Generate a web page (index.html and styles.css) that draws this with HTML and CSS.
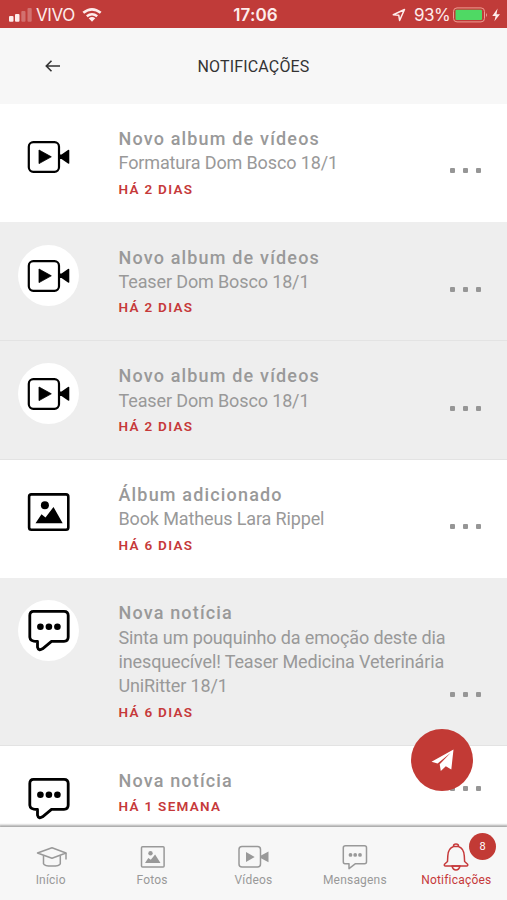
FILE: index.html
```html
<!DOCTYPE html>
<html lang="pt-BR">
<head>
<meta charset="utf-8">
<title>Notificações</title>
<link rel="stylesheet" href="styles.css">
</head>
<body>
<svg class="defs" aria-hidden="true">
  <symbol id="video" viewBox="0 0 61 61">
    <rect x="10.8" y="16.2" width="30.2" height="29.6" rx="4.5" fill="none" stroke="currentColor" stroke-width="2.2"/>
    <path d="M21 24v13.6L33.300 30.8z" stroke="currentColor" stroke-width=".8" stroke-linejoin="round"/>
    <path d="M41 28.5h2.5l6.500-4.600q1.300-.5 1.300.7v12.300q0 1.200-1.300.7L43.500 33H41z"/>
  </symbol>
  <symbol id="photo" viewBox="0 0 61 61">
    <rect x="11.100" y="12.400" width="39.200" height="35.400" rx="2.300" fill="none" stroke="currentColor" stroke-width="2.600"/>
    <circle cx="26.900" cy="23.200" r="4"/>
    <path d="M17.500 41.300l6-9.100 4 3.200 8-10.400 9.200 16.300z"/>
  </symbol>
  <symbol id="chat" viewBox="0 0 61 61">
    <path d="M15.500 11.300H46q4.200 0 4.200 4.200v21.600q0 4.200-4.200 4.200H33.500l-9 7.500q-4 2.500-5-1.700v-5.600q-7.500 0-7.700-4.200V15.500q0-4.200 3.700-4.200z" fill="none" stroke="currentColor" stroke-width="2.800" stroke-linejoin="round"/>
    <circle cx="22.400" cy="26.800" r="3.300"/><circle cx="30.900" cy="26.800" r="3.300"/><circle cx="39.400" cy="26.800" r="3.300"/>
  </symbol>
</svg>
<div class="app">
  <div class="status">
    <div class="status-side">
      <svg class="signal" width="24" height="16" viewBox="0 0 24 16"><rect x="0" y="9" width="4.500" height="5.800" rx="1"/><rect x="6" y="7" width="4.500" height="7.800" rx="1"/><g opacity=".3"><rect x="12.300" y="4" width="4.200" height="10.800" rx="1"/><rect x="18.500" y="1" width="4.200" height="13.800" rx="1"/></g></svg>
      <span class="carrier">VIVO</span>
      <svg class="wifi" width="20" height="16" viewBox="0 0 20 16"><g fill="none" stroke="currentColor" stroke-width="2.600"><path d="M1.300 5.800Q10-1.200 18.700 5.800"/><path d="M4.800 9.300Q10 5.200 15.200 9.300"/></g><path d="M6.700 11.200Q10 8.800 13.300 11.200L10 14.700z"/></svg>
    </div>
    <span class="clock">17:06</span>
    <div class="status-side status-right">
      <svg class="location" width="14" height="14" viewBox="0 0 14 14"><path d="M1.300 6.800L12.500 1.500 7.600 12.500 6.800 7.300z" fill="none" stroke="currentColor" stroke-width="1.500" stroke-linejoin="round"/></svg>
      <span class="percent">93%</span>
      <svg class="battery" width="48" height="16" viewBox="0 0 48 16"><rect x="-.5" y=".9" width="31" height="14" rx="3.500" fill="none" stroke="#ef9d92"/><rect x="1.500" y="2.800" width="26.500" height="10.300" rx="1" fill="#4fd964"/><path d="M32 6q2 2 0 4z" fill="#e7a09b"/><path d="M43.600 1.500L38.300 9h3.300l-1.200 5.300L46 7.300h-3.500z"/></svg>
    </div>
  </div>
  <header class="header">
    <svg class="back" width="16" height="14" viewBox="0 0 16 14"><path d="M15 7H1.500M6.500 1.800L1.300 7l5.200 5.200" fill="none" stroke="#333" stroke-width="1.600"/></svg>
    <h1 class="page-title">NOTIFICAÇÕES</h1>
  </header>
  <main class="list">
    <article class="item">
      <span class="avatar"><svg><use href="#video"/></svg></span>
      <div class="body"><h2>Novo album de vídeos</h2><p>Formatura Dom Bosco 18/1</p><time>HÁ 2 DIAS</time></div>
      <span class="more"><i></i><i></i><i></i></span>
    </article>
    <article class="item unread">
      <span class="avatar"><svg><use href="#video"/></svg></span>
      <div class="body"><h2>Novo album de vídeos</h2><p>Teaser Dom Bosco 18/1</p><time>HÁ 2 DIAS</time></div>
      <span class="more"><i></i><i></i><i></i></span>
    </article>
    <article class="item unread">
      <span class="avatar"><svg><use href="#video"/></svg></span>
      <div class="body"><h2>Novo album de vídeos</h2><p>Teaser Dom Bosco 18/1</p><time>HÁ 2 DIAS</time></div>
      <span class="more"><i></i><i></i><i></i></span>
    </article>
    <article class="item">
      <span class="avatar"><svg><use href="#photo"/></svg></span>
      <div class="body"><h2>Álbum adicionado</h2><p>Book Matheus Lara Rippel</p><time>HÁ 6 DIAS</time></div>
      <span class="more"><i></i><i></i><i></i></span>
    </article>
    <article class="item unread">
      <span class="avatar"><svg><use href="#chat"/></svg></span>
      <div class="body"><h2>Nova notícia</h2><p>Sinta um pouquinho da emoção deste dia<br>inesquecível! Teaser Medicina Veterinária<br>UniRitter 18/1</p><time>HÁ 6 DIAS</time></div>
      <span class="more"><i></i><i></i><i></i></span>
    </article>
    <article class="item">
      <span class="avatar"><svg><use href="#chat"/></svg></span>
      <div class="body"><h2>Nova notícia</h2><time>HÁ 1 SEMANA</time></div>
      <span class="more"><i></i><i></i><i></i></span>
    </article>
  </main>
  <nav class="tabs">
    <a class="tab"><svg width="32" height="24" viewBox="0 0 32 24"><g fill="none" stroke="currentColor" stroke-width="1.500" stroke-linejoin="round"><path d="M2.500 8L17 2.800 31 8 17 13.200z"/><path d="M8.500 10.500v8.200q1 2.400 8.500 2.400t8.300-2.400v-8.200M31 8v6.500"/></g></svg><span>Início</span></a>
    <a class="tab"><svg width="26" height="24" viewBox="0 0 26 24"><rect x="2.500" y="1.700" width="22.600" height="20.200" rx="1" fill="none" stroke="currentColor" stroke-width="1.500"/><circle cx="11.500" cy="8.300" r="2.200"/><path d="M6 18.100l3.300-5 2.500 1.700 4.300-5.400 5.400 8.700z"/></svg><span>Fotos</span></a>
    <a class="tab"><svg width="32" height="24" viewBox="0 0 32 24"><rect x="2" y="1.600" width="21.500" height="20.400" rx="3" fill="none" stroke="currentColor" stroke-width="1.500"/><path d="M9 6.900v10.200l8.700-5.100zM24 10.600l7.500-4.200v10.800l-7.500-4z"/></svg><span>Vídeos</span></a>
    <a class="tab"><svg width="26" height="24" viewBox="0 0 26 24"><path d="M3.500.700h19q2 0 2 2v14q0 2-2 2H13.500L7 23.600v-4.900H3q-1.700 0-1.700-2v-14q0-2 2.200-2z" fill="none" stroke="currentColor" stroke-width="1.500" stroke-linejoin="round"/><circle cx="8.500" cy="9.900" r="1.900"/><circle cx="13.200" cy="9.900" r="1.900"/><circle cx="18" cy="9.900" r="1.900"/></svg><span>Mensagens</span></a>
    <a class="tab active"><svg width="26" height="28" viewBox="0 0 26 28"><g fill="none" stroke="currentColor" stroke-width="1.500" stroke-linejoin="round"><path d="M10.500 3.500V3q0-2 2.500-2t2.500 2v.5q5.500 2 5.800 9.500l.3 5.500 3 2.700q.7 1.700-1 1.800H2.500q-1.800-.1-1-1.800l3-2.700.3-5.500q.2-7.500 5.700-9.500zM10.500 3.500h5"/><path d="M9 23q1 4 4 4t4-4z"/></g></svg><span>Notificações</span><b class="badge">8</b></a>
  </nav>
  <button class="send" aria-label="Enviar"><svg width="23" height="23" viewBox="0 0 23 23"><path d="M.500 12.800L22.500.500 20.300 20.500 14.800 17.200 9.800 21.900 8.700 15.300 19.700 3.700 6.600 14.500z"/></svg></button>
</div>
</body>
</html>
```

FILE: styles.css
```css
* { box-sizing: border-box; }
body { margin: 0; font-family: Roboto, "Liberation Sans", sans-serif; }
svg { display: block; fill: currentColor; overflow: visible; flex: none; }
.defs { display: none; }
.app { position: relative; width: 507px; height: 900px; overflow: hidden; display: flex; flex-direction: column; background: #fff; }
.status { height: 28px; flex: none; display: grid; grid-template-columns: 1fr auto 1fr; align-items: center; padding: 2px 5px 0 9px; background: #c03b39; color: #fdeceb; }
.status-side { display: flex; align-items: center; }
.status-right { justify-content: flex-end; }
.carrier { font: 17px/26px Inter, sans-serif; margin-left: 3px; letter-spacing: -.4px; }
.wifi { margin-left: 7px; }
.clock { font: 600 17px/26px Inter, sans-serif; letter-spacing: .1px; }
.percent { font: 17px/26px Inter, sans-serif; margin: 0 4px 0 8px; letter-spacing: -.6px; }
.header { height: 76px; flex: none; display: grid; grid-template-columns: 1fr auto 1fr; align-items: center; padding-left: 45px; padding-right: 45px; background: #f7f7f7; }
.page-title { margin: 1px 0 0; font-size: 16px; font-weight: 400; letter-spacing: .15px; color: #333; }
.list { flex: 1; min-height: 0; overflow: hidden; }
.item { display: flex; align-items: flex-start; padding: 23.200px 26px 0 18px; }
.unread { background: #eee; border-bottom: 1px solid #e3e3e3; }
.avatar { width: 61px; height: 61px; flex: none; margin-top: -1px; border-radius: 50%; background: #fff; color: #000; }
.avatar svg { width: 61px; height: 61px; }
.body { flex: 1; margin-left: 39.500px; padding-bottom: 20.700px; color: #999; white-space: nowrap; }
.unread .body { padding-bottom: 19.900px; }
.body h2 { margin: 0; font-size: 18px; line-height: 24.300px; font-weight: 500; letter-spacing: 1.170px; }
.body p { margin: 0; font-size: 18px; line-height: 24.300px; letter-spacing: -.130px; }
.body time { display: block; font-size: 13.500px; line-height: 26px; font-weight: 600; letter-spacing: 1.300px; color: #c6393a; }
.more { align-self: flex-end; display: flex; gap: 8px; margin-bottom: 49px; }
.unread .more { margin-bottom: 48px; }
.more i { width: 5px; height: 5px; border-radius: 1px; background: #969696; }
.tabs { height: 73px; flex: none; display: grid; grid-template-columns: repeat(5, 1fr); background: #f7f7f7; box-shadow: 0 -1px 2px 1px #aaa; }
.tab { position: relative; display: grid; grid-template-rows: 26px 18px; justify-items: center; padding-top: 18px; font-size: 12px; line-height: 18px; color: #999; letter-spacing: .2px; }
.active { color: #c6393a; }
.active svg { margin-top: -2px; }
.badge { position: absolute; left: 63.500px; top: 5.500px; width: 27px; height: 27px; border-radius: 50%; background: #c23a35; color: #fff; font-size: 11px; line-height: 27px; font-weight: 400; text-align: center; }
.send { position: absolute; left: 411px; top: 729px; width: 62px; height: 62px; border: 0; border-radius: 50%; padding: 0; display: grid; place-items: center; background: #c23a35; color: #fff; }
```
